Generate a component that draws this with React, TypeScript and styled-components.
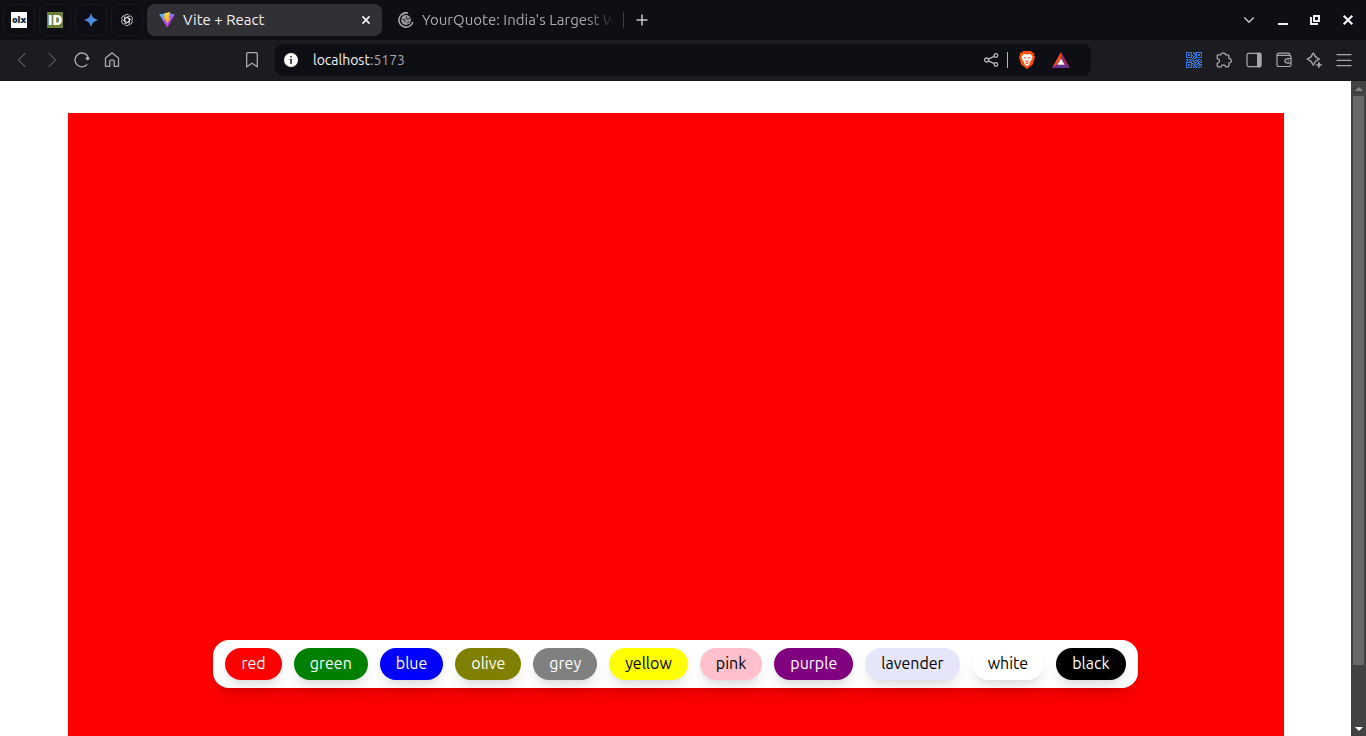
import React from 'react';
import styled, { createGlobalStyle } from 'styled-components';

const GlobalStyle = createGlobalStyle`
  * { box-sizing: border-box; }
  html, body { margin: 0; padding: 0; overflow: hidden; }
  body { font-family: Ubuntu, "Noto Sans", "Open Sans", sans-serif; background: #fff; }
  svg { display: block; flex: none; }
`;

const Window = styled.div`
  width: 100vw;
  height: 100vh;
  display: flex;
  flex-direction: column;
  overflow: hidden;
`;

const TabStrip = styled.div`
  height: 40px;
  flex: none;
  display: flex;
  align-items: center;
  padding: 0 10px 0 3px;
  background: #0e0f14;
`;

const PinnedTab = styled.div`
  width: 32px;
  height: 32px;
  margin-right: 4px;
  border: 1px solid #1a1b20;
  border-radius: 8px;
  display: flex;
  align-items: center;
  justify-content: center;
`;

const Favicon = styled.div<{ $bg: string; $fg: string; $size: number; $tight: string }>`
  width: 16px;
  height: 16px;
  display: flex;
  align-items: center;
  justify-content: center;
  background: ${(p) => p.$bg};
  color: ${(p) => p.$fg};
  font: 800 ${(p) => p.$size}px/16px "Open Sans", sans-serif;
  letter-spacing: ${(p) => p.$tight};
`;

const ActiveTab = styled.div`
  width: 235px;
  height: 32px;
  display: flex;
  align-items: center;
  padding: 0 11px 0 12px;
  border-radius: 8px;
  background: #313035;
  color: #f1f0f4;
`;

const TabTitle = styled.span`
  flex: 1;
  margin-left: 8px;
  font-size: 15px;
  font-weight: 400;
  line-height: 20px;
  white-space: nowrap;
`;

const IdleTab = styled.div`
  width: 241px;
  height: 32px;
  display: flex;
  align-items: center;
  padding-left: 16px;
  color: #a9a9ad;

  ${TabTitle} {
    flex: none;
    width: 195px;
    mask-image: linear-gradient(90deg, #000 164px, transparent 192px);
  }
`;

const TabDivider = styled.div`
  width: 1px;
  height: 16px;
  margin-right: 12px;
  background: #3c3c40;
`;

const WindowControls = styled.div`
  margin-left: auto;
  display: flex;
  align-items: center;
  gap: 17px;
`;

const Toolbar = styled.div`
  height: 41px;
  flex: none;
  display: flex;
  align-items: center;
  padding: 0 14px;
  background: #1c1b20;
  border-bottom: 1px solid #151419;
`;

const NavButtons = styled.div`
  display: flex;
  gap: 14px;
  width: 230px;
`;

const AddressBar = styled.div`
  width: 816px;
  height: 32px;
  margin-left: 15px;
  padding: 0 21px 0 8px;
  display: flex;
  align-items: center;
  border-radius: 8px;
  background: #0e0f14;
`;

const Url = styled.span`
  flex: 1;
  margin-left: 14px;
  font-size: 14px;
  line-height: 20px;
  color: #f3f3f5;
`;

const Port = styled.span`
  color: #a4a5aa;
`;

const AddressDivider = styled.div`
  width: 1px;
  height: 16px;
  margin: 0 10px 0 8px;
  background: #b5b5b8;
`;

const Extensions = styled.div`
  margin-left: auto;
  display: flex;
  gap: 14px;
`;

const Viewport = styled.div`
  flex: 1;
  min-height: 0;
  display: flex;
`;

const Page = styled.main`
  position: relative;
  flex: 1;
  padding: 32px 67px 0 68px;
  background: #fff;
`;

const Canvas = styled.div`
  height: 100%;
  background: red;
`;

const PaletteDock = styled.div`
  position: absolute;
  left: 0;
  right: 0;
  bottom: 48px;
  display: flex;
  justify-content: center;
`;

const Palette = styled.div`
  display: flex;
  gap: 12px;
  padding: 8px 12px;
  border-radius: 16px;
  background: #fff;
  box-shadow: 0 10px 15px -3px rgba(0, 0, 0, 0.1), 0 4px 6px -4px rgba(0, 0, 0, 0.1);
`;

const Swatch = styled.button<{ $color: string; $dark?: boolean }>`
  padding: 3px 16px 5px;
  border: 0;
  border-radius: 16px;
  background: ${(p) => p.$color};
  color: ${(p) => (p.$dark ? '#000' : '#fff')};
  font: 400 16px/24px Ubuntu, "Noto Sans", "Open Sans", sans-serif;
  white-space: nowrap;
  box-shadow: 0 10px 15px -3px rgba(0, 0, 0, 0.1), 0 4px 6px -4px rgba(0, 0, 0, 0.1);
`;

const Scrollbar = styled.div`
  width: 15px;
  display: flex;
  flex-direction: column;
  align-items: center;
  background: #424242;
`;

const ScrollArrow = styled.div`
  height: 15px;
  display: flex;
  align-items: center;
`;

const Thumb = styled.div`
  width: 11px;
  height: 569px;
  margin-bottom: auto;
  background: #686868;
`;

type IconProps = { size?: number; color?: string; width?: number; children: React.ReactNode };

const Icon = ({ size = 16, color = '#a9a8ad', width = 1.2, children }: IconProps) => (
  <svg width={size} height={size} viewBox="0 0 16 16" fill="none" stroke={color} strokeWidth={width}>
    {children}
  </svg>
);

const GeminiIcon = () => (
  <svg width="16" height="16" viewBox="0 0 16 16">
    <defs>
      <linearGradient id="gem" x1="0" x2="1" y1="0.2" y2="0.8">
        <stop stopColor="#8b78d8" />
        <stop offset=".4" stopColor="#4d83df" />
        <stop offset="1" stopColor="#49b4dc" />
      </linearGradient>
    </defs>
    <path d="M8 1Q9.2 6.8 15 8Q9.2 9.2 8 15Q6.8 9.2 1 8Q6.8 6.8 8 1Z" fill="url(#gem)" />
  </svg>
);

const KnotIcon = () => (
  <Icon color="#d4d4d6" width={0.85}>
    {[0, 60, 120, 180, 240, 300].map((a) => (
      <path key={a} transform={`rotate(${a} 8 8)`} d="M5.7 9.3V4.8Q5.7 2.3 8.1 2.3Q9.5 2.3 10.4 3.3M5.7 6.7L8 5.3L11.6 7.4" />
    ))}
  </Icon>
);

const ViteIcon = () => (
  <svg width="16" height="16" viewBox="0 0 16 16">
    <defs>
      <linearGradient id="vite" x1="0" x2=".7" y1="0" y2="1">
        <stop stopColor="#41d1ff" />
        <stop offset=".75" stopColor="#bd34fe" />
      </linearGradient>
      <linearGradient id="bolt" x1="0" x2="0" y1="0" y2="1">
        <stop stopColor="#ffd83b" />
        <stop offset="1" stopColor="#ffa800" />
      </linearGradient>
    </defs>
    <path d="M.2 2.2L8 1.2L15.8 2.2L8.2 15.8Z" fill="url(#vite)" />
    <path d="M11.3.1L5.6 1.2L5.2 7.5L7.2 7.1L6.7 9.7L8.2 9.3L7.5 13L11.5 6L9.5 6.3Z" fill="url(#bolt)" />
  </svg>
);

const LoadingGlobeIcon = () => (
  <svg width="16" height="16" viewBox="0 0 16 16" fill="none" stroke="#a8a8ab">
    <path d="M8 .9A7.1 7.1 0 1 0 15.1 8" strokeWidth="1.6" transform="rotate(15 8 8)" />
    <path d="M4 3L6 1.2" strokeWidth="1.6" />
    <circle cx="8" cy="8" r="4.9" fill="#9c9ca0" stroke="none" />
    <path d="M4.2 7L6.5 8L7.3 10.2M9 4.5L8 6.5L9.7 7.2L12 6.2M9.3 11L11 9.3" stroke="#303034" strokeWidth="1.1" />
  </svg>
);

const BraveIcon = () => (
  <svg width="18" height="18" viewBox="0 0 18 18">
    <path d="M5.2 0H12.8L14.3 1.6L16.3 2L16.1 4.3L17 6L14.8 13.4L9 18L3.2 13.4L1 6L1.9 4.3L1.7 2L3.7 1.6Z" fill="#fb4d0a" />
    <path d="M5.8 3L9 3.5L12.2 3L14.6 5.8L13.3 9.5L11.6 11.3L12 12.7L9 15.2L6 12.7L6.4 11.3L4.7 9.5L3.4 5.8Z" fill="#fff" />
    <path d="M5 5.8L7.9 6.5L7.3 7.9ZM13 5.8L10.1 6.5L10.7 7.9ZM7.5 8L7.7 10.4L9 11.1L10.3 10.4L10.5 8L9.6 9.7H8.4ZM6.8 12.3L9 11.3L11.2 12.3L9 12.9Z" fill="#fb4d0a" />
  </svg>
);

const BatIcon = () => (
  <svg width="18" height="16" viewBox="0 0 18 16">
    <path d="M9 0V6L5 13L0 16Z" fill="#ff4a24" />
    <path d="M9 0L18 16L13 13L9 6Z" fill="#a5276b" />
    <path d="M0 16L4.5 12.6H13.5L18 16Z" fill="#652f91" />
    <path d="M9 6.4L12.7 12.7H5.3Z" fill="#fff" />
  </svg>
);

const qrRows = [
  '1111110101111111',
  '1000010110100001',
  '1011010011101101',
  '1011011001101101',
  '1000010110100001',
  '1111110101111111',
  '0000001011000000',
  '1101110100101101',
  '0110101101110010',
  '1001010110011101',
  '1111110011101011',
  '1000011101011100',
  '1011010110110111',
  '1011011011001101',
  '1000010101110010',
  '1111110110101101',
];

const QrIcon = () => (
  <svg width="16" height="16" viewBox="0 0 16 16" fill="#3578e5" shapeRendering="crispEdges">
    {qrRows.flatMap((row, y) =>
      [...row].map((cell, x) => (cell === '1' ? <rect key={`${x}-${y}`} x={x} y={y} width="1" height="1" /> : null)),
    )}
  </svg>
);

const swatches = [
  { name: 'red' },
  { name: 'green' },
  { name: 'blue' },
  { name: 'olive' },
  { name: 'grey' },
  { name: 'yellow', dark: true },
  { name: 'pink', dark: true },
  { name: 'purple' },
  { name: 'lavender', dark: true },
  { name: 'white', dark: true },
  { name: 'black' },
];

export default function App() {
  return (
    <Window>
      <GlobalStyle />
      <TabStrip>
        <PinnedTab><Favicon $bg="#fff" $fg="#102c35" $size={9} $tight="-0.1px">olx</Favicon></PinnedTab>
        <PinnedTab><Favicon $bg="#6b8136" $fg="#fff" $size={14} $tight="-0.3px">ID</Favicon></PinnedTab>
        <PinnedTab><GeminiIcon /></PinnedTab>
        <PinnedTab><KnotIcon /></PinnedTab>
        <ActiveTab>
          <ViteIcon />
          <TabTitle>Vite + React</TabTitle>
          <Icon size={10} color="#f4f4f6" width={2.6}><path d="M2.3 2.3L13.7 13.7M13.7 2.3L2.3 13.7" /></Icon>
        </ActiveTab>
        <IdleTab>
          <LoadingGlobeIcon />
          <TabTitle>YourQuote: India's Largest W</TabTitle>
        </IdleTab>
        <TabDivider />
        <svg width="12" height="12" viewBox="0 0 12 12" fill="none" stroke="#c7c7ca" strokeWidth="1.5"><path d="M6 .5V11.5M.5 6H11.5" /></svg>
        <WindowControls>
          <Icon color="#c2c2c5" width={1.5}><path d="M3.3 5.5L8 10.3L12.7 5.5" /></Icon>
          <Icon color="#f0f0f3" width={2}><path d="M4 12H14" /></Icon>
          <Icon color="#f0f0f3" width={2}><path d="M7 4H12V9H7ZM4 5V12H11" /></Icon>
          <Icon color="#f0f0f3" width={2.2}><path d="M3.7 3.7L12.3 12.3M12.3 3.7L3.7 12.3" /></Icon>
        </WindowControls>
      </TabStrip>
      <Toolbar>
        <NavButtons>
          <Icon color="#58575c"><path d="M11.3 1.2L4.5 8L11.3 14.8" /></Icon>
          <Icon color="#58575c"><path d="M4.7 1.2L11.5 8L4.7 14.8" /></Icon>
          <Icon width={1.4}><path d="M13.2 12.4A6.9 6.9 0 1 1 14 4.7" /><circle cx="13.6" cy="6.4" r="1.8" fill="#a9a8ad" stroke="none" /></Icon>
          <Icon width={1.3}><path d="M1.5 6L8 .9L14.5 6V14.3H10.3V9.4Q10.3 8.2 9.3 8.2H6.7Q5.7 8.2 5.7 9.4V14.3H1.5Z" /><path d="M8 9.5V14.3" opacity=".25" /></Icon>
        </NavButtons>
        <Icon width={1.3}><path d="M2.7 14.8V2Q2.7.7 4 .7H12Q13.3.7 13.3 2V14.8L8 11.2Z" /></Icon>
        <AddressBar>
          <svg width="16" height="16" viewBox="0 0 16 16"><circle cx="8" cy="8" r="7" fill="#fff" /><path d="M7.1 4H8.9V5.6H7.1ZM6.5 7H8.9V12H7.2V8H6.5Z" fill="#37373b" /></svg>
          <Url>localhost<Port>:5173</Port></Url>
          <Icon color="#b8b8bb" width={1.3}><circle cx="3.6" cy="8" r="2" /><circle cx="12.9" cy="3.5" r="1.8" /><circle cx="12.9" cy="12.5" r="1.8" /><path d="M5.4 7.1L11.2 4.3M5.4 8.9L11.2 11.7" /></Icon>
          <AddressDivider />
          <BraveIcon />
          <svg width="16" height="1" />
          <BatIcon />
        </AddressBar>
        <Extensions>
          <QrIcon />
          <Icon width={1.3}><path d="M2 2.8H4.7Q5.3.8 7.2.8Q9.1.8 9.7 2.8H11.7Q12.9 2.8 12.9 4V6.3Q15.3 6.7 15.3 8.8Q15.3 10.8 12.9 11.1V13.6Q12.9 14.9 11.7 14.9H9.8Q9.2 12.9 7.4 12.9Q5.5 12.9 5 14.9H2.4Q1.2 14.9 1.2 13.6V11.3Q3.5 10.7 3.5 9Q3.5 7.1 1.2 6.6V3.6Q1.2 2.8 2 2.8Z" /></Icon>
          <Icon><rect x="1" y="1.4" width="14" height="13.2" rx="1.5" /><path d="M11.6 1.4H14.6V14.6H11.6Z" fill="#a9a8ad" /></Icon>
          <Icon><path d="M1 3Q1 1.2 3 1.2H12.5Q14 1.2 14 3V4.5M1 3.4H13.5Q15 3.4 15 5V12.8Q15 14.5 13.3 14.5H2.7Q1 14.5 1 12.8ZM15 6.7H11.6Q9 6.8 9 9Q9 11.2 11.6 11.2H15M11.4 9H13" /></Icon>
          <Icon width={1.25}><path d="M7.2 1.1Q7.7 1.1 8 2Q9 5.5 12.5 6.5Q14.2 7.1 12.5 7.7Q9 8.7 8 12.2Q7.4 14 6.7 12.2Q5.6 8.7 2 7.7Q.2 7.1 2 6.5Q5.6 5.5 6.5 2Q6.8 1.1 7.2 1.1Z" /><path d="M13 10.2V15.8M10.2 13H15.8" strokeWidth="1.7" /></Icon>
          <Icon width={1.2}><path d="M.5 2.6H15.5M.5 8.3H15.5M.5 13.6H15.5" /></Icon>
        </Extensions>
      </Toolbar>
      <Viewport>
        <Page>
          <Canvas />
          <PaletteDock>
            <Palette>
              {swatches.map((s) => (
                <Swatch key={s.name} $color={s.name} $dark={s.dark}>{s.name}</Swatch>
              ))}
            </Palette>
          </PaletteDock>
        </Page>
        <Scrollbar>
          <ScrollArrow><svg width="8" height="4" viewBox="0 0 8 4"><path d="M0 4L4 0L8 4Z" fill="#868686" /></svg></ScrollArrow>
          <Thumb />
          <ScrollArrow><svg width="8" height="4" viewBox="0 0 8 4"><path d="M0 0H8L4 4Z" fill="#fff" /></svg></ScrollArrow>
        </Scrollbar>
      </Viewport>
    </Window>
  );
}
